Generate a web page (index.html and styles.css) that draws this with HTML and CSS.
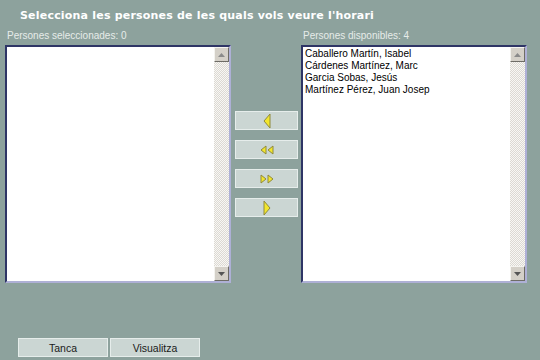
FILE: index.html
```html
<!DOCTYPE html>
<html lang="ca">
<head>
    <meta charset="UTF-8">
    <title>Selecció de persones</title>
    <link rel="stylesheet" href="styles.css">
</head>
<body>
    <h1 class="title">Selecciona les persones de les quals vols veure l'horari</h1>

    <div class="picker">
        <div class="column">
            <div class="label">Persones seleccionades: 0</div>
            <div class="listbox">
                <ul class="items"></ul>
                <div class="scrollbar">
                    <div class="sb-btn"><svg width="7" height="4" viewBox="0 0 7 4"><path d="M3.5 0 L7 4 L0 4 Z" fill="#8a8a8a"/></svg></div>
                    <div class="sb-track"></div>
                    <div class="sb-btn"><svg width="7" height="4" viewBox="0 0 7 4"><path d="M0 0 L7 0 L3.5 4 Z" fill="#555"/></svg></div>
                </div>
            </div>
        </div>

        <div class="moves">
            <button class="move" title="Afegeix">
                <svg width="8" height="16" viewBox="0 0 8 16"><path d="M7 1 L1 8 L7 15 Z" fill="#f2e62c" stroke="#8f8a3c" stroke-width="1"/></svg>
            </button>
            <button class="move" title="Afegeix tots">
                <svg width="14" height="10" viewBox="0 0 14 10"><path d="M6 1 L1 5 L6 9 Z M13 1 L8 5 L13 9 Z" fill="#f2e62c" stroke="#8f8a3c" stroke-width="1"/></svg>
            </button>
            <button class="move" title="Treu tots">
                <svg width="14" height="10" viewBox="0 0 14 10"><path d="M1 1 L6 5 L1 9 Z M8 1 L13 5 L8 9 Z" fill="#f2e62c" stroke="#8f8a3c" stroke-width="1"/></svg>
            </button>
            <button class="move" title="Treu">
                <svg width="8" height="16" viewBox="0 0 8 16"><path d="M1 1 L7 8 L1 15 Z" fill="#f2e62c" stroke="#8f8a3c" stroke-width="1"/></svg>
            </button>
        </div>

        <div class="column">
            <div class="label">Persones disponibles: 4</div>
            <div class="listbox">
                <ul class="items">
                    <li>Caballero Martín, Isabel</li>
                    <li>Cárdenes Martínez, Marc</li>
                    <li>Garcia Sobas, Jesús</li>
                    <li>Martínez Pérez, Juan Josep</li>
                </ul>
                <div class="scrollbar">
                    <div class="sb-btn"><svg width="7" height="4" viewBox="0 0 7 4"><path d="M3.5 0 L7 4 L0 4 Z" fill="#8a8a8a"/></svg></div>
                    <div class="sb-track"></div>
                    <div class="sb-btn"><svg width="7" height="4" viewBox="0 0 7 4"><path d="M0 0 L7 0 L3.5 4 Z" fill="#555"/></svg></div>
                </div>
            </div>
        </div>
    </div>

    <div class="footer">
        <button class="action">Tanca</button>
        <button class="action">Visualitza</button>
    </div>
</body>
</html>
```

FILE: styles.css
```css
* {
    margin: 0;
    padding: 0;
    box-sizing: border-box;
}

body {
    background-color: #8da29d;
    font-family: 'DejaVu Sans', Verdana, sans-serif;
    width: 540px;
    height: 360px;
    overflow: hidden;
}

.title {
    color: #ffffff;
    font-size: 11px;
    font-weight: bold;
    padding: 9px 0 0 20px;
    height: 30px;
    letter-spacing: 0.2px;
}

.picker {
    display: flex;
    padding-left: 5px;
}

.column {
    width: 226px;
    display: flex;
    flex-direction: column;
}

.label {
    color: #e6ece9;
    font-family: 'Liberation Sans', Tahoma, sans-serif;
    font-size: 10px;
    height: 15px;
    padding-left: 2px;
}

.listbox {
    display: flex;
    height: 238px;
    background-color: #ffffff;
    border-style: solid;
    border-width: 2px;
    border-color: #2e3566 #aeb0d6 #aeb0d6 #2e3566;
}

.items {
    flex: 1;
    list-style: none;
    padding: 1px 0 0 2px;
    font-family: 'Liberation Sans', Tahoma, sans-serif;
    font-size: 10px;
    line-height: 12px;
    color: #000000;
}

.scrollbar {
    width: 15px;
    display: flex;
    flex-direction: column;
}

.sb-btn {
    height: 15px;
    display: flex;
    align-items: center;
    justify-content: center;
    background-color: #d4d0c8;
    border-style: solid;
    border-width: 1px;
    border-color: #f4f3ef #6e6c66 #6e6c66 #f4f3ef;
}

.sb-track {
    flex: 1;
    background-color: #ffffff;
    background-image: repeating-conic-gradient(#dcd9d3 0 25%, #f8f7f4 0 50%);
    background-size: 2px 2px;
}

.moves {
    width: 63px;
    margin: 81px 3px 0 4px;
    display: flex;
    flex-direction: column;
    gap: 10px;
}

.move {
    height: 19px;
    background-color: #cbd6d3;
    border: 1px solid #e6edeb;
    display: flex;
    align-items: center;
    justify-content: center;
    cursor: pointer;
}

.footer {
    display: flex;
    gap: 2px;
    padding: 55px 0 0 18px;
}

.action {
    width: 90px;
    height: 19px;
    background-color: #cbd6d3;
    border: 1px solid #e6edeb;
    font-family: 'Liberation Sans', Tahoma, sans-serif;
    font-size: 10.5px;
    color: #1a1a1a;
    cursor: pointer;
}
```
